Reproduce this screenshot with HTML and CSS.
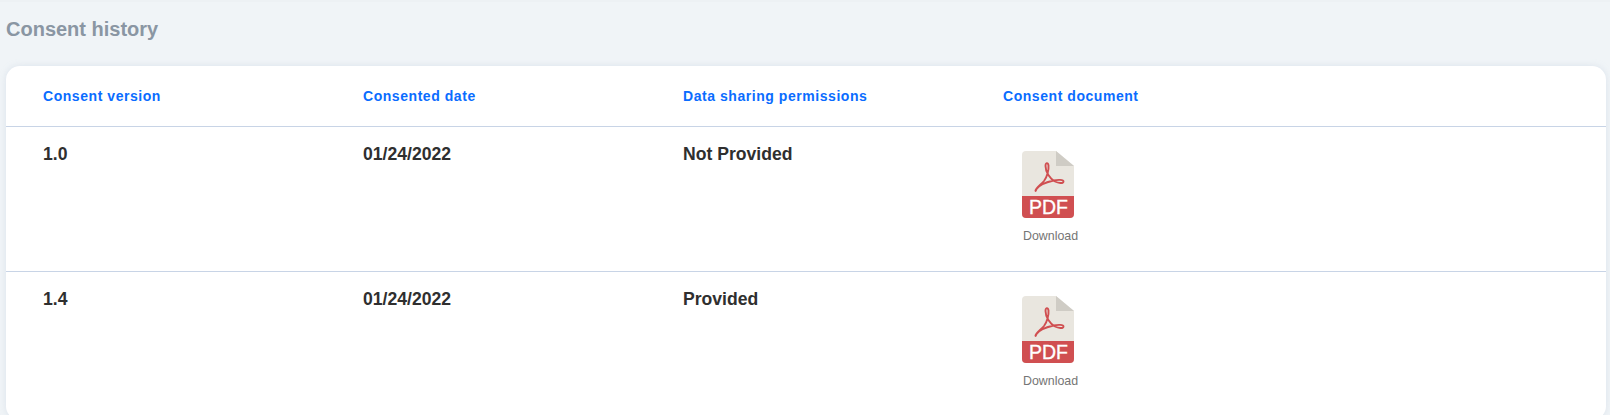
FILE: index.html
```html
<!DOCTYPE html>
<html lang="en">
<head>
<meta charset="utf-8">
<title>Consent history</title>
<link rel="stylesheet" href="styles.css">
</head>
<body>
<main class="page">
  <h1 class="title">Consent history</h1>
  <section class="card">
    <div class="row head">
      <div>Consent version</div>
      <div>Consented date</div>
      <div>Data sharing permissions</div>
      <div>Consent document</div>
    </div>
    <div class="row item">
      <div>1.0</div>
      <div>01/24/2022</div>
      <div>Not Provided</div>
      <a class="doc" href="#">
        <svg class="pdf-icon" viewBox="0 0 52 67" width="52" height="67" aria-hidden="true">
          <path d="M4 0H34L52 15V63a4 4 0 0 1-4 4H4a4 4 0 0 1-4-4V4a4 4 0 0 1 4-4Z" fill="#e9e6df"/>
          <path d="M34 0L52 15H34Z" fill="#cfccc5"/>
          <path d="M0 45H52V63a4 4 0 0 1-4 4H4a4 4 0 0 1-4-4Z" fill="#d04f51"/>
          <path d="M13.5 39.5C14 36.500 19 33.500 22 30C25 26 27 19 26.500 14.500C26 11 23.500 11.500 23.500 15C23.500 21 28 28 33 30.500C36 32 41.500 33 41.500 30.500C41.500 28.500 36 28.500 31.500 29.500C25 31 17 34 14.500 38C13.500 40 13.500 40.500 13.500 39.500Z" fill="none" stroke="#d04f51" stroke-width="1.9" stroke-linejoin="round"/>
          <text x="26.500" y="62.500" text-anchor="middle" class="pdf-label">PDF</text>
        </svg>
        <span class="doc-label">Download</span>
      </a>
    </div>
    <div class="row item">
      <div>1.4</div>
      <div>01/24/2022</div>
      <div>Provided</div>
      <a class="doc" href="#">
        <svg class="pdf-icon" viewBox="0 0 52 67" width="52" height="67" aria-hidden="true">
          <path d="M4 0H34L52 15V63a4 4 0 0 1-4 4H4a4 4 0 0 1-4-4V4a4 4 0 0 1 4-4Z" fill="#e9e6df"/>
          <path d="M34 0L52 15H34Z" fill="#cfccc5"/>
          <path d="M0 45H52V63a4 4 0 0 1-4 4H4a4 4 0 0 1-4-4Z" fill="#d04f51"/>
          <path d="M13.5 39.5C14 36.500 19 33.500 22 30C25 26 27 19 26.500 14.500C26 11 23.500 11.500 23.500 15C23.500 21 28 28 33 30.500C36 32 41.500 33 41.500 30.500C41.500 28.500 36 28.500 31.500 29.500C25 31 17 34 14.500 38C13.500 40 13.500 40.500 13.500 39.500Z" fill="none" stroke="#d04f51" stroke-width="1.9" stroke-linejoin="round"/>
          <text x="26.500" y="62.500" text-anchor="middle" class="pdf-label">PDF</text>
        </svg>
        <span class="doc-label">Download</span>
      </a>
    </div>
  </section>
</main>
</body>
</html>
```
FILE: styles.css
```css
* { box-sizing: border-box; }
html, body { margin: 0; height: 100%; }
body {
  background: #f0f4f7;
  font-family: "Liberation Sans", Arial, sans-serif;
  overflow: hidden;
}
.page { padding: 17px 4px 0 6px; border-top: 2px solid #edf1f4; }
.title {
  margin: 0 0 26px;
  font-size: 20px;
  line-height: 21px;
  font-weight: 700;
  color: #8a96a3;
}
.card {
  background: #fff;
  border-radius: 14px;
  box-shadow: 0 0 6px rgba(180, 195, 215, 0.35);
  height: 354px;
}
.row {
  display: grid;
  grid-template-columns: repeat(4, 320px);
  padding-left: 37px;
  border-bottom: 1px solid #c8d4e6;
}
.head {
  height: 61px;
  padding-bottom: 1px;
  align-items: center;
  font-size: 14px;
  font-weight: 700;
  letter-spacing: 0.55px;
  color: #0a6cff;
}
.item {
  height: 145px;
  padding-top: 17px;
  font-size: 17.6px;
  line-height: 20px;
  font-weight: 700;
  color: #2f2f2f;
}
.item:last-child { border-bottom: 0; }
.doc {
  display: flex;
  flex-direction: column;
  align-items: flex-start;
  text-decoration: none;
  padding: 7px 0 0 19px;
}
.pdf-icon { display: block; width: 52px; height: 67px; }
.pdf-label {
  font: 400 19.5px "Liberation Sans", Arial, sans-serif;
  fill: #fff;
  stroke: #fff;
  stroke-width: 0.3px;
}
.doc-label {
  margin: 10px 0 0 1px;
  font-size: 12.4px;
  line-height: 16px;
  font-weight: 400;
  color: #757575;
}
```
